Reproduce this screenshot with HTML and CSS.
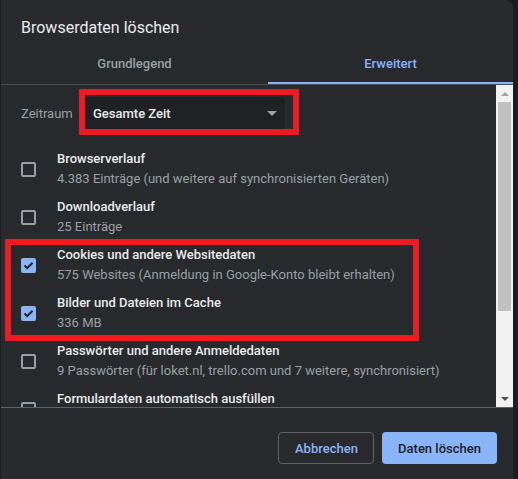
FILE: index.html
```html
<!DOCTYPE html>
<html lang="de">
<head>
    <meta charset="UTF-8">
    <meta name="viewport" content="width=device-width, initial-scale=1.0">
    <title>Browserdaten löschen</title>
    <link rel="stylesheet" href="styles.css">
</head>
<body>
    <div class="dialog">
        <h1 class="dialog-title">Browserdaten löschen</h1>

        <!-- Tabs -->
        <div class="tabs">
            <div class="tab tab-basic">Grundlegend</div>
            <div class="tab active">Erweitert</div>
        </div>

        <!-- Liste mit Datentypen -->
        <div class="dialog-body">
            <div class="list">
                <div class="period-row">
                    <span class="period-label">Zeitraum</span>
                    <div class="select">
                        <span>Gesamte Zeit</span>
                        <span class="select-arrow"></span>
                    </div>
                </div>

                <div class="item">
                    <span class="checkbox"></span>
                    <div class="item-text">
                        <div class="item-title">Browserverlauf</div>
                        <div class="item-sub">4.383 Einträge (und weitere auf synchronisierten Geräten)</div>
                    </div>
                </div>
                <div class="item">
                    <span class="checkbox"></span>
                    <div class="item-text">
                        <div class="item-title">Downloadverlauf</div>
                        <div class="item-sub">25 Einträge</div>
                    </div>
                </div>
                <div class="item">
                    <span class="checkbox checked">
                        <svg viewBox="0 0 15 15" width="15" height="15"><path d="M3.5 7.5 L6.2 10.2 L11.5 4.8" fill="none" stroke="#202124" stroke-width="2"/></svg>
                    </span>
                    <div class="item-text">
                        <div class="item-title">Cookies und andere Websitedaten</div>
                        <div class="item-sub">575 Websites (Anmeldung in Google-Konto bleibt erhalten)</div>
                    </div>
                </div>
                <div class="item">
                    <span class="checkbox checked">
                        <svg viewBox="0 0 15 15" width="15" height="15"><path d="M3.5 7.5 L6.2 10.2 L11.5 4.8" fill="none" stroke="#202124" stroke-width="2"/></svg>
                    </span>
                    <div class="item-text">
                        <div class="item-title">Bilder und Dateien im Cache</div>
                        <div class="item-sub">336 MB</div>
                    </div>
                </div>
                <div class="item">
                    <span class="checkbox"></span>
                    <div class="item-text">
                        <div class="item-title">Passwörter und andere Anmeldedaten</div>
                        <div class="item-sub">9 Passwörter (für loket.nl, trello.com und 7 weitere, synchronisiert)</div>
                    </div>
                </div>
                <div class="item">
                    <span class="checkbox"></span>
                    <div class="item-text item-text-tall">
                        <div class="item-title">Formulardaten automatisch ausfüllen</div>
                    </div>
                </div>
            </div>

            <div class="scrollbar">
                <div class="sb-btn"><span class="sb-arrow up"></span></div>
                <div class="sb-track"><div class="sb-thumb"></div></div>
                <div class="sb-btn"><span class="sb-arrow down"></span></div>
            </div>
        </div>

        <div class="footer">
            <button class="btn btn-cancel">Abbrechen</button>
            <button class="btn btn-primary">Daten löschen</button>
        </div>

        <!-- rote Markierungen -->
        <div class="mark mark-period"></div>
        <div class="mark mark-cookies"></div>
    </div>
</body>
</html>
```

FILE: styles.css
```css
* {
    margin: 0;
    padding: 0;
    box-sizing: border-box;
    font-family: Roboto, "Liberation Sans", sans-serif;
}

body {
    background-color: #1c1d20;
    overflow: hidden;
}

/* Dialog */
.dialog {
    position: relative;
    margin-left: 1px;
    width: 512px;
    height: 479px;
    background: #292a2d;
    border-top-right-radius: 8px;
    color: #e8eaed;
}

.dialog-title {
    font-size: 16px;
    font-weight: 400;
    line-height: 24px;
    padding: 16px 20px 0;
    color: #e8eaed;
}

/* Tabs */
.tabs {
    display: flex;
    border-bottom: 1px solid #494c50;
}

.tab {
    height: 44px;
    padding-top: 4px;
    display: flex;
    align-items: center;
    justify-content: center;
    font-size: 13px;
    font-weight: 500;
    color: #9aa0a6;
    border-bottom: 2px solid transparent;
}

.tab-basic {
    flex: 0 0 267px;
}

.tab.active {
    flex: 1;
    color: #8ab4f8;
    border-bottom-color: #8ab4f8;
}

/* Bereich mit Scrollbar */
.dialog-body {
    display: flex;
    height: 323px;
    border-bottom: 1px solid #5f6368;
}

.list {
    flex: 1;
    overflow: hidden;
}

.period-row {
    display: flex;
    align-items: center;
    padding: 12px 0 16px 20px;
}

.period-label {
    flex: 0 0 63px;
    font-size: 13px;
    color: #9aa0a6;
}

.select {
    width: 201px;
    height: 32px;
    background: #202124;
    border-radius: 4px;
    display: flex;
    align-items: center;
    justify-content: space-between;
    padding: 0 8px 0 9px;
    font-size: 13px;
    font-weight: 500;
    color: #e8eaed;
}

.select-arrow {
    width: 0;
    height: 0;
    border-left: 5px solid transparent;
    border-right: 5px solid transparent;
    border-top: 5px solid #9aa0a6;
}

.item {
    display: flex;
    align-items: center;
    gap: 21px;
    height: 48px;
    padding-left: 20px;
}

.checkbox {
    flex: 0 0 15px;
    width: 15px;
    height: 15px;
    border: 2px solid #9aa0a6;
    border-radius: 2px;
}

.checkbox.checked {
    border: none;
    background: #8ab4f8;
}

.checkbox svg {
    display: block;
}

.item-text-tall {
    height: 40px;
}

.item-title {
    font-size: 13px;
    font-weight: 500;
    line-height: 20px;
    color: #e8eaed;
}

.item-sub {
    font-size: 13px;
    line-height: 20px;
    color: #9aa0a6;
}

/* Scrollbar */
.scrollbar {
    flex: 0 0 17px;
    display: flex;
    flex-direction: column;
    background: #f1f1f1;
}

.sb-btn {
    height: 17px;
    display: flex;
    align-items: center;
    justify-content: center;
}

.sb-arrow {
    width: 0;
    height: 0;
    border-left: 4px solid transparent;
    border-right: 4px solid transparent;
}

.sb-arrow.up {
    border-bottom: 4px solid #a3a3a3;
}

.sb-arrow.down {
    border-top: 4px solid #505050;
}

.sb-track {
    flex: 1;
    padding: 0 2px;
}

.sb-thumb {
    height: 209px;
    background: #c1c1c1;
}

/* Footer */
.footer {
    display: flex;
    justify-content: flex-end;
    gap: 8px;
    padding: 24px 16px 0;
}

.btn {
    height: 32px;
    border-radius: 4px;
    font-size: 13px;
    font-weight: 500;
    padding: 0 16px;
    cursor: pointer;
}

.btn-cancel {
    width: 96px;
    background: transparent;
    border: 1px solid #5f6368;
    color: #8ab4f8;
}

.btn-primary {
    width: 115px;
    background: #8ab4f8;
    border: none;
    color: #202124;
}

/* Markierungen */
.mark {
    position: absolute;
    border: 6px solid #ed1c24;
}

.mark-period {
    left: 78px;
    top: 89px;
    width: 220px;
    height: 46px;
}

.mark-cookies {
    left: 4px;
    top: 239px;
    width: 414px;
    height: 102px;
}
```
